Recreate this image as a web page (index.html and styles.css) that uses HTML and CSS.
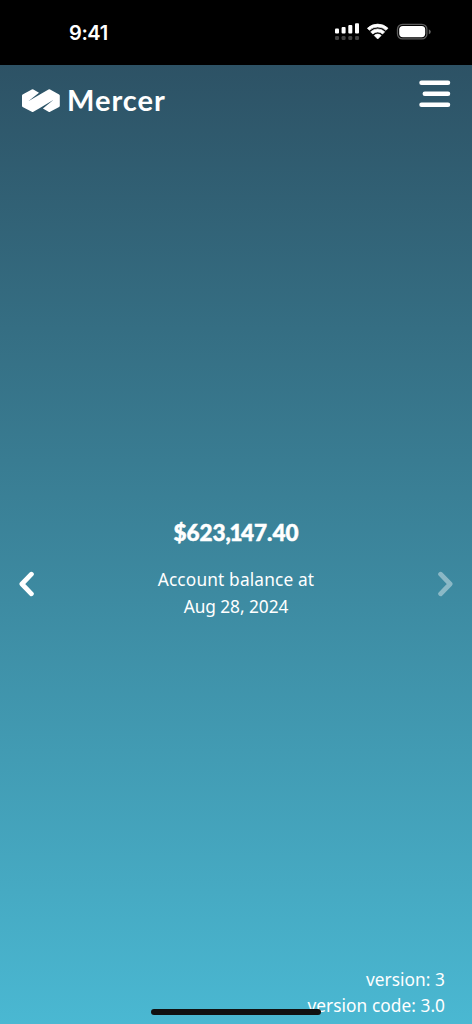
FILE: index.html
```html
<!DOCTYPE html>
<html lang="en">
<head>
<meta charset="utf-8">
<meta name="viewport" content="width=device-width, initial-scale=1">
<title>Mercer</title>
<link rel="stylesheet" href="styles.css">
</head>
<body>
<div class="screen">
  <div class="status">
    <span class="time">9:41</span>
    <svg class="indicators" width="98" height="20" viewBox="0 0 98 20" fill="#fff">
      <rect x="0" y="6.6" width="4" height="5" rx="1"/><rect x="6.6" y="5" width="4" height="6.6" rx="1"/><rect x="13.3" y="3" width="4" height="8.6" rx="1"/><rect x="20" y="1.3" width="4" height="10.3" rx="1"/>
      <g fill="#424242"><rect x="0" y="14" width="4" height="4" rx="1.3"/><rect x="6.6" y="14" width="4" height="4" rx="1.3"/><rect x="13.3" y="14" width="4" height="4" rx="1.3"/><rect x="20" y="14" width="4" height="4" rx="1.3"/></g>
      <path d="M32.4 6.2 A15 15 0 0 1 53 6.2 L51 8.3 A12.1 12.1 0 0 0 34.4 8.3 Z M35.7 9.8 A10 10 0 0 1 49.7 9.8 L47.6 12 A7 7 0 0 0 37.8 12 Z M39.2 13.5 A5 5 0 0 1 46.2 13.5 L42.7 17 Z" stroke="#fff" stroke-width=".7" stroke-linejoin="round"/>
      <rect x="62.5" y="2.3" width="29.4" height="14.6" rx="5" fill="none" stroke="#5c5c5c" stroke-width="1.3"/>
      <rect x="64.2" y="4" width="26" height="11.2" rx="3.6"/>
      <path d="M93.8 7.2 Q95.8 8.2 95.8 9.7 T93.8 12.2 Z" fill="#666"/>
    </svg>
  </div>
  <header class="header">
    <div class="brand">
      <svg width="38" height="24" viewBox="0 0 38 24" fill="#fff">
        <path d="M0 6.7 Q0 6 .6 5.6 L9.8 .5 Q10.6 0 11.4 .5 L17 3.8 L6.3 12.3 L20 4.3 L26.5 .5 Q27.3 0 28.1 .5 L37.1 5.6 Q37.8 6 37.8 6.7 V16.8 Q37.8 17.5 37.1 17.9 L28.1 22.8 Q27.3 23.2 26.5 22.8 L20.9 19.4 L31.6 10.8 L17.9 18.9 L11.4 22.8 Q10.6 23.2 9.8 22.8 L.6 17.9 Q0 17.5 0 16.8 Z"/>
      </svg>
      <span class="wordmark">Mercer</span>
    </div>
    <svg class="menu" width="32" height="28" viewBox="0 0 32 28" stroke="#fff" stroke-width="4.5" stroke-linecap="round"><path d="M2.5 2.8H29M5.8 13.8H29M2.5 24.8H29"/></svg>
  </header>
  <main class="balance">
    <svg class="arrow" width="17" height="26" viewBox="0 0 17 26"><path d="M13.4 3.2 L3.9 13 L13.4 22.8"/></svg>
    <div class="summary">
      <div class="amount">$623,<span class="one">1</span>47.40</div>
      <div class="caption">Account balance at</div>
      <div class="caption date">Aug 28, 2024</div>
    </div>
    <svg class="arrow disabled" width="17" height="26" viewBox="0 0 17 26"><path d="M3.6 3.2 L13.1 13 L3.6 22.8"/></svg>
  </main>
  <footer class="versions"><div class="version">version: 3</div><div class="code">version code: 3.0</div></footer>
  <div class="home"></div>
</div>
</body>
</html>
```
FILE: styles.css
```css
body { margin: 0; }
.screen {
  position: relative;
  display: flex;
  flex-direction: column;
  width: 472px;
  height: 1024px;
  overflow: hidden;
  color: #fff;
  font-family: "Noto Sans", sans-serif;
  background: linear-gradient(#2d5265 65px, #4ab8d2 1024px);
}
.status {
  display: flex;
  justify-content: space-between;
  flex: none;
  box-sizing: border-box;
  height: 65px;
  padding: 20px 39px 0 69px;
  background: #000;
}
.time { padding-top: 1px; font: 600 20px/24px Inter, sans-serif; letter-spacing: -.4px; }
.indicators { margin-top: 2px; }
.header {
  display: flex;
  justify-content: space-between;
  align-items: flex-start;
  height: 60px;
  padding: 15px 21px 0 22px;
}
.brand { display: flex; gap: 7px; padding-top: 9px; }
.wordmark { font: 700 29px/22px Lato, sans-serif; letter-spacing: 1px; }
.menu { fill: none; }
.balance {
  display: flex;
  justify-content: space-between;
  padding: 381px 18px 0;
}
.arrow {
  margin-top: 50px;
  fill: none;
  stroke: #fff;
  stroke-width: 4.8;
  stroke-linecap: round;
  stroke-linejoin: round;
}
.disabled { opacity: .4; }
.summary { text-align: center; white-space: nowrap; }
.amount { margin-top: -3px; font: 900 22.5px/30px Lato, sans-serif; -webkit-text-stroke: .5px #fff; }
.one { margin: 0 -1.5px; }
.caption { font-size: 17.3px; line-height: 26.5px; letter-spacing: .15px; }
.amount + .caption { margin-top: 19px; }
.date { letter-spacing: -.05px; }
.versions {
  margin-top: auto;
  padding: 0 27px 5px 0;
  text-align: right;
  font-size: 17.3px;
  line-height: 26px;
  letter-spacing: .05px;
}
.home {
  position: absolute;
  left: 151px;
  bottom: 9px;
  width: 170px;
  height: 6px;
  border-radius: 3px;
  background: #111;
}
```
